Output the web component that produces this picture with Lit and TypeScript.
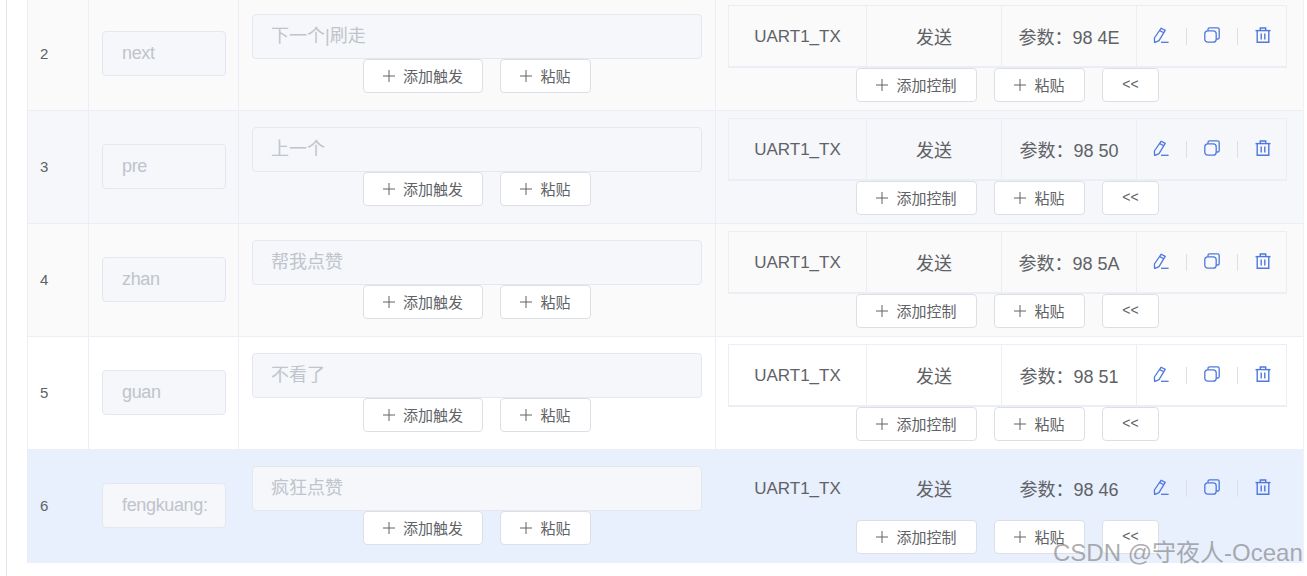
import { LitElement, html, css, svg, unsafeCSS } from "lit";
import { customElement } from "lit/decorators.js";

const FONT = unsafeCSS(`"Liberation Sans", "Noto Sans CJK SC", sans-serif`);

const rows = [
  { n: 2, name: "next", trig: "下一个|刷走", param: "98 4E", tone: "odd" },
  { n: 3, name: "pre", trig: "上一个", param: "98 50", tone: "blue" },
  { n: 4, name: "zhan", trig: "帮我点赞", param: "98 5A", tone: "odd" },
  { n: 5, name: "guan", trig: "不看了", param: "98 51", tone: "white" },
  { n: 6, name: "fengkuang:", trig: "疯狂点赞", param: "98 46", tone: "sel" },
];

const plus = svg`<svg class="plus" viewBox="0 0 12 12" width="12" height="12"><path d="M6 0v12M0 6h12" stroke="currentColor" stroke-width="1" fill="none"/></svg>`;

const editIcon = html`<svg class="ic" viewBox="0 0 16 16" width="16" height="16" fill="none" stroke="#4e78de" stroke-width="1.3" stroke-linejoin="round"><path d="M8.2 1.2l4 2.2L6 13.6l-4.4 2-.2-4.6z"/><path d="M6.8 3.6l4 2.2"/><path d="M8 15.3h7.6"/></svg>`;
const copyIcon = html`<svg class="ic" viewBox="0 0 16 16" width="16" height="16" fill="none" stroke="#4e78de" stroke-width="1.3" stroke-linejoin="round"><path d="M4 3.8V2.4c0-.9.7-1.6 1.6-1.6h8c.9 0 1.6.7 1.6 1.6v8c0 .9-.7 1.6-1.6 1.6h-1.4"/><rect x="0.8" y="3.8" width="11.4" height="11.4" rx="3"/></svg>`;
const trashIcon = html`<svg class="ic" viewBox="0 0 16 16" width="16" height="16" fill="none" stroke="#4e78de" stroke-width="1.4"><path d="M.5 3.6h15"/><path d="M5.3 3.6V1h5.4v2.6"/><path d="M2.2 3.6v11.7h11.6V3.6"/><path d="M6.2 6.6v6M9.8 6.6v6"/></svg>`;

@customElement("app-root")
export class AppRoot extends LitElement {
  static styles = css`
    :host {
      display: block;
      position: relative;
      width: 1307px;
      height: 576px;
      overflow: hidden;
      background: #fff;
      font-family: ${FONT};
      color: #606266;
    }
    .page {
      height: 576px;
      box-sizing: border-box;
      margin-left: 6px;
      border-left: 1px solid #e4e4e4;
      padding-left: 20px;
      overflow: hidden;
    }
    .table {
      width: 1275px;
      margin-top: -2px;
      border-left: 1px solid #ebeef5;
      border-right: 1px solid #f0f2f6;
    }
    .row {
      display: grid;
      grid-template-columns: 61px 150px 477px 585px;
      height: 113px;
      box-sizing: border-box;
      border-bottom: 1px solid #ebeef5;
    }
    .row.odd { background: #fafafa; }
    .row.blue { background: #f5f7fb; }
    .row.white { background: #fff; }
    .row.sel { background: #e8effd; border-bottom-color: #e8effd; }
    .cell {
      border-right: 1px solid #ebeef5;
      box-sizing: border-box;
      min-width: 0;
    }
    .row.sel .cell { border-right-color: transparent; }
    .num {
      display: flex;
      align-items: center;
      padding-left: 12px;
      padding-bottom: 2px;
      font-size: 15px;
    }
    .namecell {
      display: flex;
      align-items: center;
      padding-left: 13px;
      padding-bottom: 2px;
    }
    .input {
      box-sizing: border-box;
      background: #f5f7fa;
      border: 1px solid #e4e7ed;
      border-radius: 4px;
      color: #c0c4cc;
      font-size: 18px;
      display: flex;
      align-items: center;
      overflow: hidden;
      white-space: nowrap;
    }
    .name {
      width: 124px;
      height: 45px;
      padding: 0 18px 0 19px;
      letter-spacing: -0.35px;
    }
    .name span { overflow: hidden; display: block; }
    .trigcell {
      padding: 16px 13px 0;
      display: flex;
      flex-direction: column;
    }
    .trig {
      width: 450px;
      height: 45px;
      padding: 0 0 5px 18px;
    }
    .btns {
      display: flex;
      gap: 17px;
      justify-content: center;
    }
    .btn {
      box-sizing: border-box;
      height: 34px;
      background: #fff;
      border: 1px solid #dcdfe6;
      border-radius: 4px;
      display: flex;
      align-items: center;
      justify-content: center;
      gap: 8px;
      font-size: 15px;
      color: #606266;
      padding-bottom: 2px;
    }
    .plus { display: block; margin-top: 2px; }
    .w120 { width: 120px; }
    .w91 { width: 91px; }
    .w121 { width: 121px; }
    .w57 { width: 57px; }
    .ctrlcell {
      padding: 7px 0 0 12px;
      display: flex;
      flex-direction: column;
      border-right: none !important;
    }
    .inner {
      width: 559px;
      height: 63px;
      box-sizing: border-box;
      display: grid;
      grid-template-columns: 138px 135px 135px 151px;
      border: 1px solid #ebeef5;
      border-bottom-width: 2px;
      font-size: 18px;
      color: #606266;
    }
    .row.sel .inner { border-color: transparent; }
    .ic-cell, .t {
      display: flex;
      align-items: center;
      justify-content: center;
      box-sizing: border-box;
      border-right: 1px solid #ebeef5;
      white-space: nowrap;
    }
    .row.sel .t { border-right-color: transparent; }
    .uart { font-size: 17px; padding-top: 1px; }
    .ic-cell {
      border-right: none;
      justify-content: flex-start;
      padding: 0 0 2px 16px;
    }
    .ic { display: block; flex: none; }
    .div {
      width: 1px;
      height: 17px;
      background: #dcdfe6;
      margin: 3px 17px 0;
      flex: none;
    }
    .ctrlbtns {
      display: flex;
      gap: 17px;
      padding-left: 128px;
    }
    .chev { font-size: 14px; }
    .wm {
      position: absolute;
      left: 1053px;
      top: 539px;
      font-size: 24px;
      line-height: 28px;
      color: rgba(120, 120, 120, 0.6);
      white-space: nowrap;
    }
  `;

  render() {
    return html`
      <div class="page">
        <div class="table">
          ${rows.map(
            (r) => html`
              <div class="row ${r.tone}">
                <div class="cell num">${r.n}</div>
                <div class="cell namecell">
                  <div class="input name"><span>${r.name}</span></div>
                </div>
                <div class="cell trigcell">
                  <div class="input trig">${r.trig}</div>
                  <div class="btns">
                    <div class="btn w120">${plus}<span>添加触发</span></div>
                    <div class="btn w91">${plus}<span>粘贴</span></div>
                  </div>
                </div>
                <div class="cell ctrlcell">
                  <div class="inner">
                    <div class="t uart">UART1_TX</div>
                    <div class="t">发送</div>
                    <div class="t">参数：${r.param}</div>
                    <div class="ic-cell">
                      ${editIcon}<span class="div"></span>${copyIcon}<span class="div"></span>${trashIcon}
                    </div>
                  </div>
                  <div class="ctrlbtns">
                    <div class="btn w121">${plus}<span>添加控制</span></div>
                    <div class="btn w91">${plus}<span>粘贴</span></div>
                    <div class="btn w57 chev">&lt;&lt;</div>
                  </div>
                </div>
              </div>
            `
          )}
        </div>
      </div>
      <div class="wm">CSDN @守夜人-Ocean</div>
    `;
  }
}
